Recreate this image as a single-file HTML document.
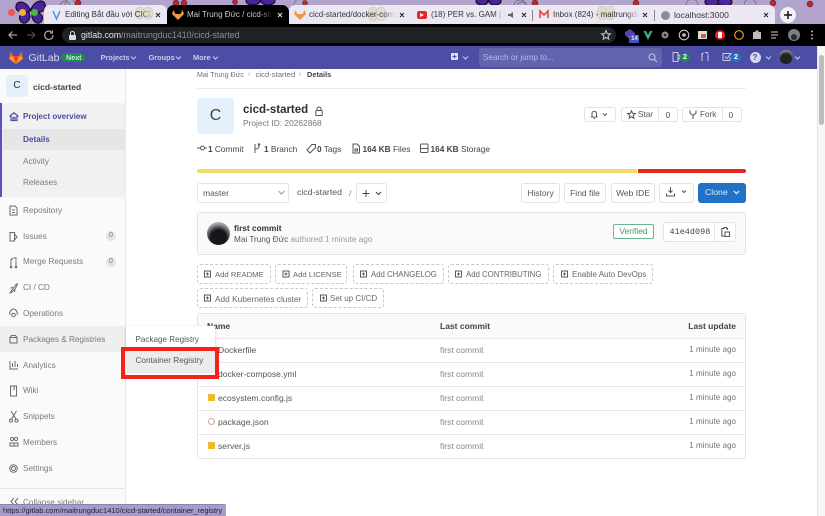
<!DOCTYPE html>
<html><head><meta charset="utf-8"><title>cicd-started</title>
<style>
html,body{margin:0;padding:0;width:825px;height:516px;overflow:hidden;background:#fff}
body{position:relative;font-family:"Liberation Sans","Noto Sans CJK SC",sans-serif;font-size:8.5px;color:#555;filter:blur(.35px)}
.a,.t{position:absolute}
.t{white-space:nowrap;line-height:12px;transform:translateY(-6px)}
.b{font-weight:bold}
.box{position:absolute;box-sizing:border-box;border:1px solid #e3e3e3;border-radius:3px;background:#fff}
.dash{position:absolute;box-sizing:border-box;border:1px dashed #c9c9c9;border-radius:3px;height:20px}
.side{color:#7a7a7a;font-size:8.200px}
svg{position:absolute;overflow:visible}
.row{position:absolute;left:197px;width:549px;height:1px;background:#e8e8e8}
.tab{color:#333;font-size:8px;overflow:hidden;-webkit-mask-image:linear-gradient(90deg,#000 85%,transparent)}
</style></head><body>

<!-- tab strip -->
<div class="a" style="left:0;top:0;width:825px;height:24px;background:#b2a4cd"></div>
<svg style="left:0;top:0" width="825" height="24">
 <g fill="#4d2399" stroke="#17102a" stroke-width="1.200">
  <path d="M30 9C24 -1 15 1 16 8C17 13 25 13 30 11Z"/><path d="M31 9C37 -3 47 0 45 8C44 13 36 13 31 11Z"/>
  <path d="M29 12C23 11 18 15 20 20C22 25 28 24 30 17Z"/><path d="M32 12C38 11 44 15 42 20C40 25 34 24 32 17Z"/>
  <ellipse cx="253" cy="1" rx="7" ry="4"/><ellipse cx="268" cy="1" rx="7" ry="4"/>
  <ellipse cx="482" cy="1" rx="6" ry="4"/><ellipse cx="495" cy="1" rx="6" ry="4"/>
  <ellipse cx="712" cy="2" rx="7" ry="4"/><ellipse cx="725" cy="2" rx="7" ry="4"/>
 </g>
 <g fill="#c8232a" stroke="#222" stroke-width=".5"><circle cx="176" cy="3" r="3"/><circle cx="184" cy="3" r="3"/><circle cx="78" cy="3" r="2.500"/><circle cx="535" cy="3" r="3"/><circle cx="636" cy="3" r="3"/><circle cx="773" cy="3" r="3"/><circle cx="810" cy="4" r="3"/><circle cx="78" cy="3" r="3"/><circle cx="305" cy="3" r="2.500"/><circle cx="235" cy="2" r="2.500"/></g>
 <g fill="none" stroke="#6c6470" stroke-width=".7"><circle cx="65" cy="6" r="5"/><circle cx="300" cy="5" r="6"/><circle cx="520" cy="6" r="6"/><circle cx="750" cy="5" r="6"/><circle cx="70" cy="4" r="5"/><circle cx="522" cy="7" r="5"/><circle cx="692" cy="5" r="6"/></g>
</svg>
<div class="a" style="left:44px;top:5px;width:123px;height:19px;background:#ece8f3;border-radius:6px 6px 0 0"></div>
<div class="a" style="left:167px;top:5px;width:122px;height:19px;background:#000;border-radius:7px 7px 0 0"></div>
<div class="a" style="left:289px;top:5px;width:486px;height:19px;background:#ece8f3;border-radius:6px 6px 0 0"></div>
<svg style="left:0;top:0" width="825" height="24" opacity=".45">
 <g fill="#d9cf9c" stroke="#a39d8a" stroke-width=".6"><ellipse cx="140" cy="13" rx="5" ry="6"/><ellipse cx="148" cy="13" rx="5" ry="6"/><ellipse cx="373" cy="14" rx="5" ry="7"/><ellipse cx="381" cy="14" rx="5" ry="7"/><ellipse cx="602" cy="13" rx="5" ry="7"/><ellipse cx="610" cy="13" rx="5" ry="7"/></g>
</svg>
<div class="a" style="left:532px;top:10px;width:1px;height:11px;background:#8a8591"></div>
<div class="a" style="left:654px;top:10px;width:1px;height:11px;background:#8a8591"></div>
<div class="a" style="left:8px;top:9px;width:7px;height:7px;border-radius:50%;background:#f2554c"></div>
<div class="a" style="left:19px;top:9px;width:7px;height:7px;border-radius:50%;background:#f0b33a"></div>
<div class="a" style="left:31px;top:9px;width:7px;height:7px;border-radius:50%;background:#4cb548"></div>

<svg style="left:52px;top:10px" width="9" height="10"><path d="M1 1L4.500 9L8 1" fill="none" stroke="#4b8fe0" stroke-width="1.400"/></svg>
<div class="t tab" style="left:65px;top:15px;width:88px">Editing Bắt đầu với CICD</div>
<svg style="left:172px;top:10px" width="12" height="10"><path d="M6 10L0 4L1.500 0L3.500 4H8.500L10.500 0L12 4Z" fill="#f0983f"/></svg>
<div class="t tab" style="left:187px;top:15px;width:86px;color:#c9c9c9">Mai Trung Đức / cicd-started</div>
<svg style="left:294px;top:10px" width="12" height="10"><path d="M6 10L0 4L1.500 0L3.500 4H8.500L10.500 0L12 4Z" fill="#f0983f"/></svg>
<div class="t tab" style="left:309px;top:15px;width:87px">cicd-started/docker-compose</div>
<div class="a" style="left:417px;top:11px;width:10px;height:8px;background:#e8262a;border-radius:2px"></div>
<svg style="left:420px;top:13px" width="4" height="4"><path d="M0 0L4 2L0 4Z" fill="#fff"/></svg>
<div class="t tab" style="left:431px;top:15px;width:74px">(18) PER vs. GAM | OFFICIAL</div>
<svg style="left:508px;top:12px" width="7" height="6"><path d="M0 2H2L5 0V6L2 4H0Z" fill="#666"/></svg>
<svg style="left:539px;top:10px" width="10" height="9"><path d="M1 8V1L5 5L9 1V8" fill="none" stroke="#e2463a" stroke-width="1.600"/></svg>
<div class="t tab" style="left:553px;top:15px;width:86px">Inbox (824) - maitrungduc1410</div>
<div class="a" style="left:661px;top:11px;width:9px;height:9px;border-radius:50%;background:#8e8e92"></div>
<div class="t" style="left:674px;top:15px;color:#333;font-size:8.500px">localhost:3000</div>
<svg style="left:0;top:0" width="825" height="24" fill="none" stroke-width="1.100" stroke="#222">
 <path d="M156 13L160 17M160 13L156 17M400 13L404 17M404 13L400 17M522 13L526 17M526 13L522 17M643 13L647 17M647 13L643 17M764 13L768 17M768 13L764 17"/>
 <path d="M278 13L282 17M282 13L278 17" stroke="#ddd"/>
</svg>
<div class="a" style="left:780px;top:7px;width:16px;height:16px;border-radius:50%;background:#f3f0f8"></div>
<svg style="left:784px;top:11px" width="8" height="8" fill="none" stroke="#111" stroke-width="1.500"><path d="M4 0V8M0 4H8"/></svg>

<!-- toolbar -->
<div class="a" style="left:0;top:24px;width:825px;height:22px;background:#000"></div>
<svg style="left:8px;top:30px" width="45" height="10" fill="none" stroke-width="1.200">
 <path d="M9 5H1M4.500 1.500L1 5L4.500 8.500" stroke="#a8a8a8"/>
 <path d="M19 5H27M23.500 1.500L27 5L23.500 8.500" stroke="#4d4d4d"/>
 <path d="M45 5A4.200 4.200 0 1 1 43.500 2M44.500 .5V3H42" stroke="#a8a8a8"/>
</svg>
<div class="a" style="left:62px;top:27px;width:554px;height:16px;background:#202124;border-radius:8px"></div>
<svg style="left:69px;top:31px" width="7" height="9"><path d="M1.500 4V2.500A2 2 0 0 1 5.500 2.500V4" fill="none" stroke="#ddd"/><rect y="4" width="7" height="5" rx="1" fill="#ddd"/></svg>
<div class="t" style="left:81px;top:35px;font-size:8.800px;color:#e6e6e6">gitlab.com<span style="color:#8f8f8f">/maitrungduc1410/cicd-started</span></div>
<svg style="left:0;top:24px" width="825" height="22">
 <path d="M606 6.500L607.300 9.600L610.500 9.900L608 12L608.800 15.200L606 13.500L603.200 15.200L604 12L601.500 9.900L604.700 9.600Z" fill="none" stroke="#cfcfcf"/>
 <path d="M625 8L630 5L635 9V14H628L625 11Z" fill="#5b3fb0"/><rect x="629" y="11" width="10" height="8" rx="1" fill="#4a55b5"/>
 <path d="M643.500 7L648 16L652.500 7H650L648 11L646 7Z" fill="#3eb27f"/>
 <circle cx="665" cy="11" r="3.500" fill="#8a8a8a"/><circle cx="665" cy="11" r="1.300" fill="#222"/>
 <circle cx="684" cy="11" r="4.800" fill="none" stroke="#c5c5c5" stroke-width="1.100"/><circle cx="684" cy="11" r="1.800" fill="#c5c5c5"/>
 <rect x="698" y="7" width="9" height="8" fill="#ddd"/><rect x="701" y="10" width="5" height="4" fill="#d5603e"/>
 <circle cx="720" cy="11" r="5" fill="#e8201d"/><rect x="718" y="8" width="4" height="6" rx="1" fill="#fff"/>
 <circle cx="739" cy="11" r="4.300" fill="none" stroke="#e69a2b" stroke-width="1.200"/>
 <path d="M753 8H755.500V6.500H758.500V8H761V15H753Z" fill="#bdbdbd"/>
 <path d="M771 8H778M771 11H778M771 14H776" stroke="#ccc" stroke-width="1"/>
 <circle cx="794" cy="11" r="6" fill="#7b8088"/><circle cx="794" cy="13" r="3" fill="#2a2a2e"/>
 <circle cx="812" cy="7.500" r=".9" fill="#ddd"/><circle cx="812" cy="11" r=".9" fill="#ddd"/><circle cx="812" cy="14.500" r=".9" fill="#ddd"/>
</svg>
<div class="t" style="left:630px;top:39px;width:9px;text-align:center;color:#e6e6f5;font-size:6px;font-weight:bold">14</div>

<!-- gitlab nav -->
<div class="a" style="left:0;top:46px;width:817px;height:23px;background:#4b4ea4"></div>
<svg style="left:9px;top:51px" width="14" height="13"><path d="M7 13L0 7.500L1.800 .5L3.800 5H10.200L12.200 .5L14 7.500Z" fill="#fc6d26"/><path d="M7 13L3.800 5H10.200Z" fill="#e24329"/><path d="M7 13L0 7.500L3.800 5ZM7 13L14 7.500L10.200 5Z" fill="#fca326"/></svg>
<div class="t" style="left:28.500px;top:57.500px;font-size:10.500px;color:#dcdcee">GitLab</div>
<div class="a" style="left:61px;top:53px;width:24px;height:9px;border-radius:5px;background:#1f8a52"></div>
<div class="t" style="left:66px;top:57.500px;font-size:7.200px;font-weight:bold;color:#cfe8d8">Next</div>
<div class="t b" style="left:100.500px;top:57.500px;color:#c9cbe9;font-size:7.400px">Projects</div>
<div class="t b" style="left:148.500px;top:57.500px;color:#c9cbe9;font-size:7.400px">Groups</div>
<div class="t b" style="left:193px;top:57.500px;color:#c9cbe9;font-size:7.400px">More</div>
<svg style="left:0;top:46px" width="817" height="23" fill="none" stroke="#c9cbe9" stroke-width="1">
 <path d="M131 10.500L133.500 13L136 10.500M176 10.500L178.500 13L181 10.500M213 10.500L215.500 13L218 10.500M463 10.500L465.500 13L468 10.500M766 10.500L768.500 13L771 10.500M795 10.500L797.500 13L800 10.500"/>
 <rect x="451" y="7" width="7" height="7" rx="1" fill="#dfe0f2" stroke="none"/>
 <path d="M454.500 8.500V12.500M452.500 10.500H456.500" stroke="#4b4ea4"/>
 <path d="M673 6.500H678V15.500H673ZM678 8L680.500 11L678 14"/>
 <path d="M702 7V15M708 9V15M702 8.500L703.500 7M705 6.500H707.500L708 8.500"/>
 <path d="M731 7.500H723V14.500H730V11"/><path d="M725 10.500L727 12.500L731.500 7"/>
</svg>
<div class="a" style="left:680px;top:53px;width:10px;height:9px;border-radius:5px;background:#1f8a52;color:#fff;font-size:7px;line-height:9px;text-align:center;font-weight:bold">2</div>
<div class="a" style="left:731px;top:53px;width:10px;height:9px;border-radius:5px;background:#1f75cb;color:#fff;font-size:7px;line-height:9px;text-align:center;font-weight:bold">2</div>
<div class="a" style="left:479px;top:48px;width:183px;height:19px;border-radius:3px;background:#6265ae"></div>
<div class="t" style="left:483px;top:58px;color:#b9bade;font-size:8.100px">Search or jump to...</div>
<svg style="left:648px;top:53px" width="10" height="10" fill="none" stroke="#c9cbe9"><circle cx="4" cy="4" r="3"/><path d="M6.500 6.500L9 9"/></svg>
<div class="a" style="left:749.500px;top:52px;width:11px;height:11px;border-radius:50%;background:#d6d7ee;color:#4b4ea4;font-size:8px;font-weight:bold;line-height:11px;text-align:center">?</div>
<div class="a" style="left:779px;top:50px;width:14px;height:14px;border-radius:50%;background:radial-gradient(circle at 50% 65%,#222 0 45%,#8b9099 75%)"></div>

<!-- scrollbar -->
<div class="a" style="left:817px;top:46px;width:8px;height:470px;background:#f6f6f6;border-left:1px solid #e6e6e6;box-sizing:border-box"></div>
<div class="a" style="left:819px;top:55px;width:5px;height:70px;background:#bdbdbd;border-radius:3px"></div>

<!-- sidebar -->
<div class="a" style="left:0;top:69px;width:126px;height:447px;background:#fafafa;border-right:1px solid #e9e9e9;box-sizing:border-box"></div>
<div class="a" style="left:6px;top:75px;width:22px;height:22px;border-radius:3px;background:#e4f0fb;color:#333;font-size:10px;line-height:22px;text-align:center">C</div>
<div class="t b" style="left:33px;top:86.500px;color:#444;font-size:8.500px">cicd-started</div>
<div class="a" style="left:0;top:103px;width:125px;height:94px;background:#f1f1f1"></div>
<div class="a" style="left:0;top:103px;width:2px;height:94px;background:#5b50bf"></div>
<div class="a" style="left:3px;top:129px;width:122px;height:21px;background:#e6e6e6"></div>
<svg style="left:9px;top:112px" width="10" height="9" fill="none" stroke="#4b4ea4" stroke-width="1.200"><path d="M.5 4.500L5 .8L9.500 4.500M2 3.500V8.500H8V3.500M4 8.500V5.500H6V8.500"/></svg>
<div class="t b" style="left:23px;top:116.500px;color:#4b4ea4;font-size:8px">Project overview</div>
<div class="t b" style="left:23px;top:140px;color:#4b4ea4;font-size:8.200px">Details</div>
<div class="t side" style="left:23px;top:161.500px">Activity</div>
<div class="t side" style="left:23px;top:182.500px">Releases</div>
<div class="t side" style="left:23px;top:210.500px">Repository</div>
<div class="t side" style="left:23px;top:236.500px">Issues</div>
<div class="t side" style="left:23px;top:262px">Merge Requests</div>
<div class="t side" style="left:23px;top:288px">CI / CD</div>
<div class="t side" style="left:23px;top:314px">Operations</div>
<div class="a" style="left:0;top:326px;width:125px;height:26px;background:#efefef"></div>
<div class="t side" style="left:23px;top:339.500px">Packages &amp; Registries</div>
<div class="t side" style="left:23px;top:365.500px">Analytics</div>
<div class="t side" style="left:23px;top:391px">Wiki</div>
<div class="t side" style="left:23px;top:417px">Snippets</div>
<div class="t side" style="left:23px;top:442.500px">Members</div>
<div class="t side" style="left:23px;top:468.500px">Settings</div>
<div class="a" style="left:0;top:488px;width:125px;height:1px;background:#e6e6e6"></div>
<div class="t side" style="left:23px;top:503px">Collapse sidebar</div>
<div class="a" style="left:106px;top:231px;width:10px;height:10px;border-radius:50%;background:#e4e4e4;color:#777;font-size:7px;line-height:10px;text-align:center">0</div>
<div class="a" style="left:106px;top:257px;width:10px;height:10px;border-radius:50%;background:#e4e4e4;color:#777;font-size:7px;line-height:10px;text-align:center">0</div>
<svg style="left:0;top:0" width="125" height="516" fill="none" stroke="#6a6a6a" stroke-width="1">
 <path d="M10 206H15L17 208V215H10ZM12 210H15M12 212.500H15"/>
 <path d="M10 232.500H14.500V241H10ZM14.500 234L17 237L14.500 240"/>
 <path d="M11 259V266.500M16 260.500V266.500M11 260L13 258M13.500 258H16V260"/><circle cx="11" cy="267" r=".8"/><circle cx="16" cy="267" r=".8"/>
 <path d="M10 293L12 290L16.500 284C17 283.500 17.500 284 17.500 284.500L15 289L11.500 292.500ZM10.500 288L13 287.500M15 289.500L14.500 292"/>
 <path d="M10 315C9 311 12 309 13.500 309C15 309 18 311 17 315"/><circle cx="13.500" cy="315" r="1.800"/>
 <path d="M10 337.500H17V343H10ZM10 337.500L11.500 335.500H15.500L17 337.500"/>
 <path d="M10 361V369H18M12.500 367V363M15 367V361M17.500 367V364"/>
 <path d="M10.500 386H16.500V396H10.500ZM14 386V390"/>
 <path d="M11 411L16 419M16.500 411L11.500 419"/><circle cx="11" cy="420.500" r="1.500"/><circle cx="16.500" cy="420.500" r="1.500"/>
 <circle cx="12" cy="439" r="1.600"/><circle cx="16" cy="439" r="1.600"/><path d="M10 446V443H14V446ZM14 446V443H18V446H14"/>
 <circle cx="13.500" cy="468.500" r="2"/><circle cx="13.500" cy="468.500" r="3.800"/>
 <path d="M14 498L11 501.500L14 505M18 498L15 501.500L18 505"/>
</svg>

<!-- main breadcrumb / header -->
<div class="t" style="left:197px;top:74.500px;color:#707070;font-size:7.100px">Mai Trung Đức</div>
<div class="t" style="left:248px;top:74.500px;color:#999;font-size:7px">›</div>
<div class="t" style="left:255.500px;top:74.500px;color:#707070;font-size:7.700px">cicd-started</div>
<div class="t" style="left:299px;top:74.500px;color:#999;font-size:7px">›</div>
<div class="t b" style="left:307px;top:74.500px;color:#444;font-size:7.400px">Details</div>
<div class="a" style="left:197px;top:88px;width:549px;height:1px;background:#ececec"></div>
<div class="a" style="left:197px;top:98px;width:37px;height:36px;border-radius:4px;background:#e4f0fb;color:#444;font-size:16px;line-height:36px;text-align:center">C</div>
<div class="t b" style="left:243px;top:109.500px;color:#2e2e2e;font-size:11.500px">cicd-started</div>
<svg style="left:315px;top:106px" width="8" height="10" fill="none" stroke="#555" stroke-width="1"><path d="M2 4.500V3A2 2 0 0 1 6 3V4.500"/><rect x=".8" y="4.500" width="6.400" height="5" rx=".8"/></svg>
<div class="t" style="left:243px;top:123px;color:#777;font-size:8.400px">Project ID: 20262868</div>

<svg style="left:197px;top:143px" width="240" height="11" fill="none" stroke="#555" stroke-width="1">
 <circle cx="5.500" cy="5" r="2"/><path d="M0 5H3.500M7.500 5H10"/>
 <path d="M58 1V10M58 6C62 6 62 4 62 2"/><circle cx="62" cy="1.500" r=".8"/>
 <path d="M110 7L115 1.500H118.500V4.500L113 10Z"/>
 <path d="M156 1H160L162.500 3.500V10H156ZM158 6H160.500V8H158Z"/>
 <rect x="223.500" y="1" width="7.500" height="8.500" rx="1"/><path d="M223.500 5.500H231"/>
</svg>
<div class="t" style="left:208px;top:148.500px;color:#444;font-size:8.300px"><b>1</b> Commit</div>
<div class="t" style="left:264px;top:148.500px;color:#444;font-size:8.300px"><b>1</b> Branch</div>
<div class="t" style="left:317px;top:148.500px;color:#444;font-size:8.300px"><b>0</b> Tags</div>
<div class="t" style="left:362.500px;top:148.500px;color:#444;font-size:8.300px"><b>164 KB</b> Files</div>
<div class="t" style="left:430.500px;top:148.500px;color:#444;font-size:8.300px"><b>164 KB</b> Storage</div>

<!-- project buttons -->
<div class="box" style="left:584px;top:107px;width:32px;height:15px"></div>
<svg style="left:590px;top:110px" width="20" height="9" fill="none" stroke="#555"><path d="M1 7H7.500M2 7V3.500A2.200 2.200 0 0 1 6.500 3.500V7M3.500 8.500H5"/><path d="M13 3.500L15 5.500L17 3.500"/></svg>
<div class="box" style="left:621px;top:107px;width:57px;height:15px"></div>
<div class="a" style="left:658px;top:107px;width:1px;height:15px;background:#e3e3e3"></div>
<svg style="left:627px;top:110px" width="9" height="9" fill="none" stroke="#555"><path d="M4.500 .8L5.600 3.300L8.300 3.600L6.200 5.400L6.900 8.200L4.500 6.800L2.100 8.200L2.800 5.400L.7 3.600L3.400 3.300Z"/></svg>
<div class="t" style="left:638px;top:114.500px;color:#555;font-size:8.200px">Star</div>
<div class="t" style="left:665.500px;top:114.500px;color:#555;font-size:8.500px">0</div>
<div class="box" style="left:682px;top:107px;width:60px;height:15px"></div>
<div class="a" style="left:722px;top:107px;width:1px;height:15px;background:#e3e3e3"></div>
<svg style="left:689px;top:110px" width="8" height="9" fill="none" stroke="#555"><path d="M1 .5V3L4 5.500L7 3V.5M4 5.500V9"/></svg>
<div class="t" style="left:700px;top:114.500px;color:#555;font-size:8.200px">Fork</div>
<div class="t" style="left:728.500px;top:114.500px;color:#555;font-size:8.500px">0</div>

<!-- language bar -->
<div class="a" style="left:197px;top:169px;width:440px;height:4px;background:#f2da68;border-radius:2px 0 0 2px"></div>
<div class="a" style="left:638px;top:169px;width:108px;height:4px;background:#e12b1f;border-radius:0 2px 2px 0"></div>

<!-- repo toolbar -->
<div class="box" style="left:197px;top:182.500px;width:92px;height:20px"></div>
<div class="t" style="left:203px;top:192.500px;color:#555;font-size:8.500px">master</div>
<svg style="left:278px;top:190px" width="7" height="5" fill="none" stroke="#999"><path d="M.5 1L3.500 4L6.500 1"/></svg>
<div class="t" style="left:297px;top:192px;color:#555;font-size:8.700px">cicd-started</div>
<div class="t" style="left:349px;top:192.500px;color:#888;font-size:8.500px">/</div>
<div class="box" style="left:356px;top:183px;width:31px;height:20px"></div>
<svg style="left:362px;top:188.500px" width="20" height="9" fill="none" stroke="#444"><path d="M4 1V8M.5 4.500H7.500"/><path d="M14 3L16.500 5.500L19 3"/></svg>
<div class="box" style="left:521px;top:182.500px;width:39px;height:20px;text-align:center;line-height:18px;color:#555">History</div>
<div class="box" style="left:564px;top:182.500px;width:42px;height:20px;text-align:center;line-height:18px;color:#555">Find file</div>
<div class="box" style="left:611px;top:182.500px;width:44px;height:20px;text-align:center;line-height:18px;color:#555">Web IDE</div>
<div class="box" style="left:659px;top:182.500px;width:35px;height:20px"></div>
<svg style="left:666px;top:187px" width="22" height="10" fill="none" stroke="#555"><path d="M4.500 0V5.500M2.500 3.500L4.500 5.500L6.500 3.500M.5 6.500V9H8.500V6.500"/><path d="M16 3.500L18 5.500L20 3.500"/></svg>
<div class="a" style="left:698px;top:182.500px;width:48px;height:20px;background:#1f72c6;border-radius:3px"></div>
<div class="t" style="left:705px;top:192px;color:#dbe9f8;font-size:8.700px">Clone</div>
<svg style="left:733px;top:190px" width="7" height="5" fill="none" stroke="#e6f0fb" stroke-width="1.200"><path d="M.8 1L3.500 3.700L6.200 1"/></svg>

<!-- commit box -->
<div class="box" style="left:197px;top:212px;width:549px;height:43px;background:#fafafa"></div>
<div class="a" style="left:207px;top:222px;width:23px;height:23px;border-radius:50%;background:radial-gradient(circle at 50% 68%,#15151a 0 40%,#8f949c 68%,#b5b8bd 80%,#23252b 100%)"></div>
<div class="t" style="left:234px;top:228px;color:#333;font-size:8.300px;font-weight:bold">first commit</div>
<div class="t" style="left:234px;top:240px;color:#999;font-size:8.200px"><span style="color:#555">Mai Trung Đức</span> authored 1 minute ago</div>
<div class="a" style="left:613px;top:224px;width:41px;height:15px;box-sizing:border-box;border:1px solid #6fb392;border-radius:2px;background:#fff;color:#3d9a6d;font-size:8.500px;line-height:13px;text-align:center">Verified</div>
<div class="box" style="left:663px;top:222px;width:73px;height:20px"></div>
<div class="a" style="left:714px;top:222px;width:1px;height:20px;background:#e3e3e3"></div>
<div class="t" style="left:669.500px;top:232px;font-family:'Liberation Mono',monospace;color:#444;font-size:8.500px">41e4d098</div>
<svg style="left:721px;top:227px" width="9" height="10" fill="none" stroke="#555"><path d="M6.500 3V1.500H5.500V.5H3V1.500H.8V9H3.500"/><rect x="4" y="5" width="4.500" height="4.500"/></svg>

<!-- dashed buttons -->
<div class="dash" style="left:197px;top:264px;width:74px"></div>
<div class="dash" style="left:275px;top:264px;width:72px"></div>
<div class="dash" style="left:353px;top:264px;width:91px"></div>
<div class="dash" style="left:448px;top:264px;width:101px"></div>
<div class="dash" style="left:553px;top:264px;width:100px"></div>
<div class="dash" style="left:197px;top:288px;width:111px"></div>
<div class="dash" style="left:312px;top:288px;width:72px"></div>
<svg style="left:0;top:0" width="700" height="310" fill="none" stroke="#5a5a5a">
 <rect x="204.500" y="271" width="6" height="6"/><path d="M206 274H209M207.500 272.500V275.500"/>
 <rect x="283" y="271" width="6" height="6"/><path d="M284.500 274H287.500M286 272.500V275.500"/>
 <rect x="360.500" y="271" width="6" height="6"/><path d="M362 274H365M363.500 272.500V275.500"/>
 <rect x="455.500" y="271" width="6" height="6"/><path d="M457 274H460M458.500 272.500V275.500"/>
 <rect x="561.500" y="271" width="6" height="6"/><path d="M563 274H566M564.500 272.500V275.500"/>
 <rect x="204.500" y="295" width="6" height="6"/><path d="M206 298H209M207.500 296.500V299.500"/>
 <rect x="320.500" y="295" width="6" height="6"/><path d="M322 298H325M323.500 296.500V299.500"/>
</svg>
<div class="t" style="left:215px;top:274.500px;color:#666;font-size:7.700px">Add README</div>
<div class="t" style="left:293px;top:274.500px;color:#666;font-size:7.700px">Add LICENSE</div>
<div class="t" style="left:371px;top:274.500px;color:#666;font-size:7.800px">Add CHANGELOG</div>
<div class="t" style="left:466px;top:274.500px;color:#666;font-size:7.800px">Add CONTRIBUTING</div>
<div class="t" style="left:572px;top:274.500px;color:#666;font-size:8px">Enable Auto DevOps</div>
<div class="t" style="left:215px;top:298.500px;color:#666;font-size:8.300px">Add Kubernetes cluster</div>
<div class="t" style="left:330px;top:298.500px;color:#666;font-size:8px">Set up CI/CD</div>

<!-- file table -->
<div class="box" style="left:197px;top:313px;width:549px;height:146px"></div>
<div class="a" style="left:198px;top:314px;width:547px;height:24px;background:#fafafa"></div>
<div class="row" style="top:338px"></div><div class="row" style="top:362px"></div><div class="row" style="top:386px"></div><div class="row" style="top:410px"></div><div class="row" style="top:434px"></div>
<div class="t b" style="left:207px;top:326px;color:#444;font-size:8.500px">Name</div>
<div class="t b" style="left:440px;top:326px;color:#444;font-size:8.500px">Last commit</div>
<div class="t b" style="right:89px;top:326px;color:#444;font-size:8.500px">Last update</div>
<div class="t" style="left:218px;top:350px;color:#555;font-size:8.600px">Dockerfile</div>
<div class="t" style="left:218px;top:374px;color:#555;font-size:8.500px">docker-compose.yml</div>
<div class="t" style="left:218px;top:398px;color:#555;font-size:8.500px">ecosystem.config.js</div>
<div class="t" style="left:218px;top:422px;color:#555;font-size:8.600px">package.json</div>
<div class="t" style="left:218px;top:446px;color:#555;font-size:8.600px">server.js</div>
<div class="a" style="left:208px;top:394px;width:7px;height:7px;background:#f0b92f"></div>
<div class="a" style="left:208px;top:442px;width:7px;height:7px;background:#f0b92f"></div>
<div class="a" style="left:208px;top:418px;width:5px;height:5px;border:1px solid #c9a79b;border-radius:50%"></div>
<div class="t" style="left:440px;top:350px;color:#888;font-size:8.500px">first commit</div>
<div class="t" style="left:440px;top:374px;color:#888;font-size:8.500px">first commit</div>
<div class="t" style="left:440px;top:398px;color:#888;font-size:8.500px">first commit</div>
<div class="t" style="left:440px;top:422px;color:#888;font-size:8.500px">first commit</div>
<div class="t" style="left:440px;top:446px;color:#888;font-size:8.500px">first commit</div>
<div class="t" style="right:89px;top:350px;color:#777;font-size:8.100px">1 minute ago</div>
<div class="t" style="right:89px;top:374px;color:#777;font-size:8.100px">1 minute ago</div>
<div class="t" style="right:89px;top:398px;color:#777;font-size:8.100px">1 minute ago</div>
<div class="t" style="right:89px;top:422px;color:#777;font-size:8.100px">1 minute ago</div>
<div class="t" style="right:89px;top:446px;color:#777;font-size:8.100px">1 minute ago</div>

<!-- flyout -->
<div class="a" style="left:126px;top:326px;width:89px;height:49px;background:#fff;box-shadow:0 1px 3px rgba(0,0,0,.2)"></div>
<div class="a" style="left:125px;top:351px;width:90px;height:22px;background:#ececec"></div>
<div class="t" style="left:135.500px;top:339.500px;color:#555;font-size:8.100px">Package Registry</div>
<div class="t" style="left:135.500px;top:360.500px;color:#555;font-size:8.200px">Container Registry</div>
<div class="a" style="left:121px;top:347px;width:98px;height:32px;box-sizing:border-box;border:4.500px solid #f8201a"></div>

<!-- status bar -->
<div class="a" style="left:0;top:504px;width:226px;height:12px;background:#a79cc9;border-top:1px solid #8d84ad;box-sizing:border-box;border-radius:0 2px 0 0"></div>
<div class="t" style="left:3px;top:510.500px;color:#1f1a33;font-size:7.500px">https://gitlab.com/maitrungduc1410/cicd-started/container_registry</div>
</body></html>
